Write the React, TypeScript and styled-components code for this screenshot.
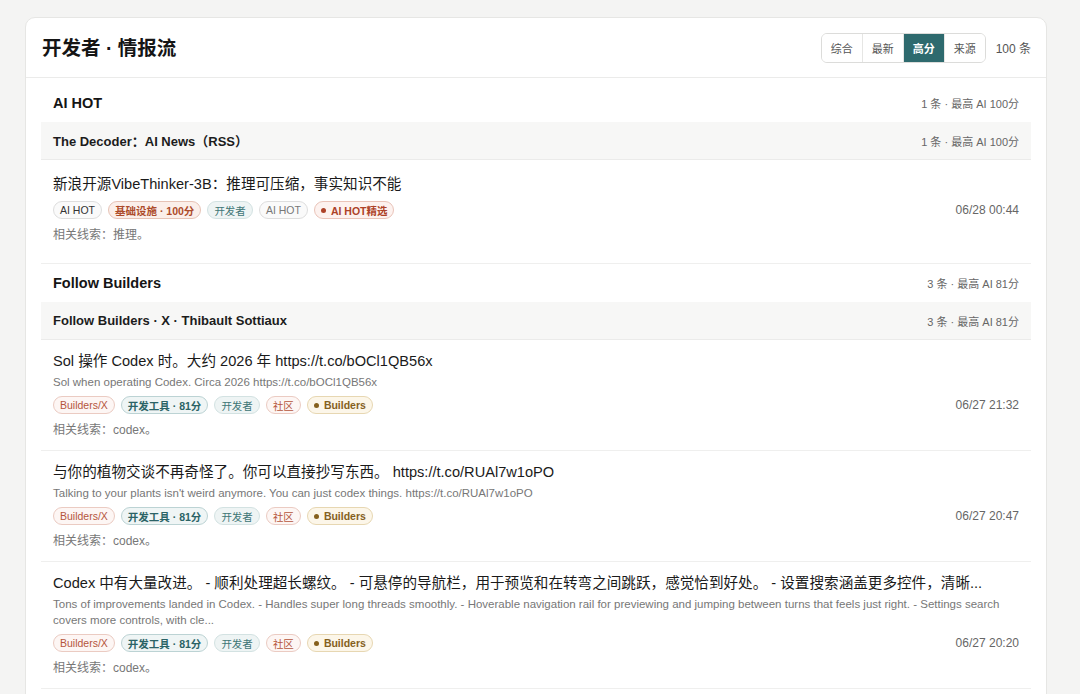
import styled, { createGlobalStyle, css } from 'styled-components';

type TagTone = 'plain' | 'muted' | 'rust' | 'teal' | 'tealStrong' | 'red' | 'pick' | 'gold';

type Tag = { label: string; tone: TagTone; dot?: boolean };

type FeedItem = {
  title: string;
  summary?: string;
  tags: Tag[];
  time: string;
  clue: string;
};

type SubGroup = { name: string; meta: string; items: FeedItem[] };
type Section = { name: string; meta: string; groups: SubGroup[] };

const builderTags: Tag[] = [
  { label: 'Builders/X', tone: 'red' },
  { label: '开发工具 · 81分', tone: 'tealStrong' },
  { label: '开发者', tone: 'teal' },
  { label: '社区', tone: 'red' },
  { label: 'Builders', tone: 'gold', dot: true },
];

const sections: Section[] = [
  {
    name: 'AI HOT',
    meta: '1 条 · 最高 AI 100分',
    groups: [
      {
        name: 'The Decoder：AI News（RSS）',
        meta: '1 条 · 最高 AI 100分',
        items: [
          {
            title: '新浪开源VibeThinker-3B：推理可压缩，事实知识不能',
            tags: [
              { label: 'AI HOT', tone: 'plain' },
              { label: '基础设施 · 100分', tone: 'rust' },
              { label: '开发者', tone: 'teal' },
              { label: 'AI HOT', tone: 'muted' },
              { label: 'AI HOT精选', tone: 'pick', dot: true },
            ],
            time: '06/28 00:44',
            clue: '相关线索：推理。',
          },
        ],
      },
    ],
  },
  {
    name: 'Follow Builders',
    meta: '3 条 · 最高 AI 81分',
    groups: [
      {
        name: 'Follow Builders · X · Thibault Sottiaux',
        meta: '3 条 · 最高 AI 81分',
        items: [
          {
            title: 'Sol 操作 Codex 时。大约 2026 年 https://t.co/bOCl1QB56x',
            summary: 'Sol when operating Codex. Circa 2026 https://t.co/bOCl1QB56x',
            tags: builderTags,
            time: '06/27 21:32',
            clue: '相关线索：codex。',
          },
          {
            title: '与你的植物交谈不再奇怪了。你可以直接抄写东西。 https://t.co/RUAl7w1oPO',
            summary:
              "Talking to your plants isn't weird anymore. You can just codex things. https://t.co/RUAl7w1oPO",
            tags: builderTags,
            time: '06/27 20:47',
            clue: '相关线索：codex。',
          },
          {
            title:
              'Codex 中有大量改进。 - 顺利处理超长螺纹。 - 可悬停的导航栏，用于预览和在转弯之间跳跃，感觉恰到好处。 - 设置搜索涵盖更多控件，清晰...',
            summary:
              'Tons of improvements landed in Codex. - Handles super long threads smoothly. - Hoverable navigation rail for previewing and jumping between turns that feels just right. - Settings search covers more controls, with cle...',
            tags: builderTags,
            time: '06/27 20:20',
            clue: '相关线索：codex。',
          },
        ],
      },
    ],
  },
];

const modes = ['综合', '最新', '高分', '来源'];

const App = () => {
  return (
    <>
      <GlobalStyle />
      <Page>
        <Card>
          <CardHeader>
            <PageTitle>开发者 · 情报流</PageTitle>
            <Controls>
              <Segmented>
                {modes.map((m) => (
                  <SegButton key={m} active={m === '高分'}>
                    {m}
                  </SegButton>
                ))}
              </Segmented>
              <Count>100 条</Count>
            </Controls>
          </CardHeader>
          <CardBody>
            {sections.map((s) => (
              <SectionBlock key={s.name}>
                <SectionHead>
                  <SectionName>{s.name}</SectionName>
                  <Meta>{s.meta}</Meta>
                </SectionHead>
                {s.groups.map((g) => (
                  <div key={g.name}>
                    <GroupHead>
                      <GroupName>{g.name}</GroupName>
                      <Meta>{g.meta}</Meta>
                    </GroupHead>
                    {g.items.map((it, i) => (
                      <Item key={i} loose={!it.summary}>
                        <ItemTitle>{it.title}</ItemTitle>
                        {it.summary && <Summary>{it.summary}</Summary>}
                        <TagLine>
                          <Tags>
                            {it.tags.map((t, j) => (
                              <Pill key={j} tone={t.tone}>
                                {t.dot && <Dot />}
                                {t.label}
                              </Pill>
                            ))}
                          </Tags>
                          <Time>{it.time}</Time>
                        </TagLine>
                        <Clue>{it.clue}</Clue>
                      </Item>
                    ))}
                  </div>
                ))}
              </SectionBlock>
            ))}
          </CardBody>
        </Card>
      </Page>
    </>
  );
};

export default App;

const GlobalStyle = createGlobalStyle`
  html, body {
    margin: 0;
    height: 100%;
    overflow: hidden;
    background: #f4f4f3;
  }
  body {
    font-family: "Liberation Sans", "Noto Sans CJK SC", sans-serif;
    color: #1c1c1c;
  }
`;

const Page = styled.div`
  padding: 17px 33px 0 25px;
`;

const Card = styled.div`
  background: #fff;
  border: 1px solid #e6e6e4;
  border-radius: 10px;
`;

const CardHeader = styled.div`
  display: flex;
  align-items: center;
  justify-content: space-between;
  height: 59px;
  padding: 0 15px 0 16px;
  border-bottom: 1px solid #ebebea;
`;

const PageTitle = styled.h1`
  margin: 0 0 2px;
  font-size: 19.5px;
  font-weight: 700;
  color: #151515;
`;

const Controls = styled.div`
  display: flex;
  align-items: center;
  gap: 10px;
`;

const Segmented = styled.div`
  display: flex;
  height: 28px;
  border: 1px solid #dcdcda;
  border-radius: 6px;
  overflow: hidden;
`;

const SegButton = styled.div<{ active?: boolean }>`
  display: flex;
  align-items: center;
  justify-content: center;
  width: 40px;
  font-size: 11px;
  color: #555;
  background: #fff;
  & + & {
    border-left: 1px solid #e6e6e4;
  }
  ${(p) =>
    p.active &&
    css`
      background: #2e6a6e;
      color: #fff;
      font-weight: 700;
    `}
`;

const Count = styled.span`
  font-size: 12px;
  color: #555;
`;

const CardBody = styled.div`
  padding: 6px 15px 20px;
`;

const SectionBlock = styled.div`
  border-bottom: 1px solid #efefee;
`;

const rowBetween = css`
  display: flex;
  align-items: center;
  justify-content: space-between;
  padding: 0 12px;
`;

const SectionHead = styled.div`
  ${rowBetween}
  height: 38px;
`;

const SectionName = styled.span`
  font-size: 14.5px;
  font-weight: 700;
  color: #151515;
`;

const Meta = styled.span`
  font-size: 11px;
  color: #666;
`;

const GroupHead = styled.div`
  ${rowBetween}
  height: 37px;
  background: #f7f7f6;
  border-bottom: 1px solid #ebebea;
`;

const GroupName = styled.span`
  font-size: 13px;
  font-weight: 700;
  color: #1c1c1c;
`;

const Item = styled.div<{ loose?: boolean }>`
  padding: ${(p) => (p.loose ? '13px 12px 20px' : '10px 12px 12px')};
  & + & {
    border-top: 1px solid #efefee;
  }
`;

const ItemTitle = styled.div`
  font-size: 14.6px;
  line-height: 22px;
  color: #1a1a1a;
`;

const Summary = styled.div`
  font-size: 11.5px;
  line-height: 16px;
  color: #777;
  margin-top: 2px;
`;

const TagLine = styled.div`
  display: flex;
  align-items: center;
  justify-content: space-between;
  margin-top: 6px;
`;

const Tags = styled.div`
  display: flex;
  gap: 6px;
`;

const tones: Record<TagTone, ReturnType<typeof css>> = {
  plain: css`
    background: #fafafa;
    border-color: #dedede;
    color: #333;
  `,
  muted: css`
    background: #fafafa;
    border-color: #dedede;
    color: #777;
  `,
  rust: css`
    background: #fbefea;
    border-color: #e6c3b6;
    color: #ad4b2a;
    font-weight: 700;
  `,
  teal: css`
    background: #eef4f4;
    border-color: #d3e2e2;
    color: #3f7676;
  `,
  tealStrong: css`
    background: #eff5f5;
    border-color: #bcd3d4;
    color: #2b6366;
    font-weight: 700;
  `,
  red: css`
    background: #fdf6f4;
    border-color: #ebcbc2;
    color: #b5553c;
  `,
  pick: css`
    background: #fdf2ef;
    border-color: #eac4b9;
    color: #ad4228;
    font-weight: 700;
  `,
  gold: css`
    background: #fcf6e9;
    border-color: #e7d7b2;
    color: #85601d;
    font-weight: 700;
  `,
};

const Pill = styled.span<{ tone: TagTone }>`
  display: inline-flex;
  align-items: center;
  gap: 5px;
  height: 18px;
  box-sizing: border-box;
  padding: 0 6px;
  border: 1px solid;
  border-radius: 9px;
  font-size: 10.5px;
  white-space: nowrap;
  ${(p) => tones[p.tone]}
`;

const Dot = styled.span`
  width: 5px;
  height: 5px;
  border-radius: 50%;
  background: currentColor;
`;

const Time = styled.span`
  font-size: 12px;
  color: #666;
`;

const Clue = styled.div`
  font-size: 12px;
  line-height: 16px;
  color: #777;
  margin-top: 8px;
`;
